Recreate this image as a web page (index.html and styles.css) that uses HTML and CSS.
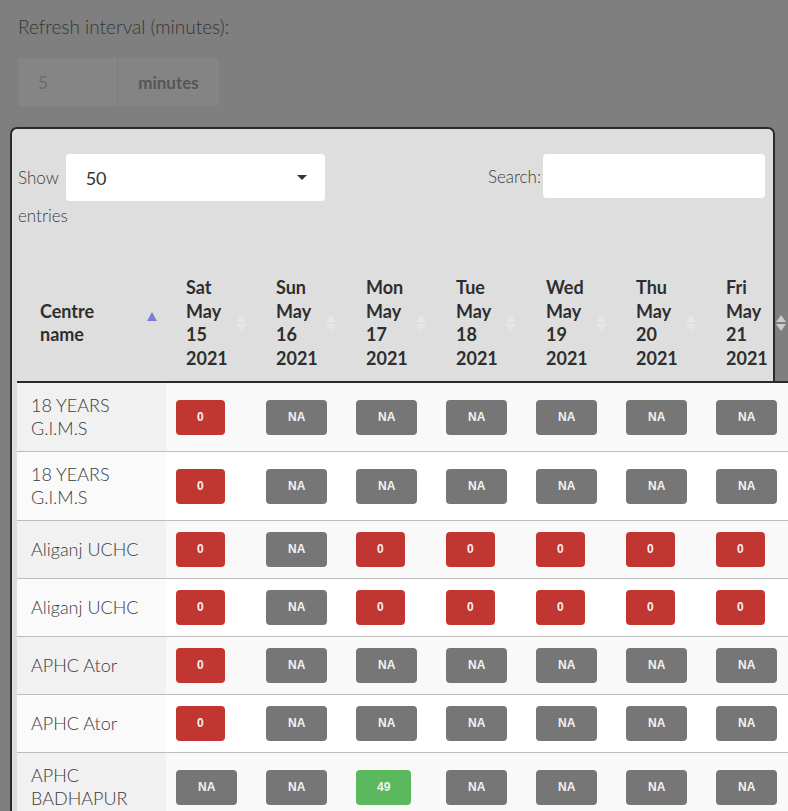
FILE: index.html
```html
<!DOCTYPE html>
<html>
<head>
<meta charset="utf-8">
<link rel="stylesheet" href="styles.css">
</head>
<body>
<div class="top">
  <div class="refresh-label">Refresh interval (minutes):</div>
  <div class="input-group"><span class="ig-input">5</span><span class="ig-addon">minutes</span></div>
</div>
<div class="panel">
  <div class="controls">
    <div class="length">
      <div class="length-row"><span>Show</span><div class="select"><span>50</span><span class="caret"></span></div></div>
      <div class="entries">entries</div>
    </div>
    <div class="filter"><span>Search:</span><div class="search-input"></div></div>
  </div>
  <table class="grid">
    <colgroup><col class="c-name"><col class="c-day"><col class="c-day"><col class="c-day"><col class="c-day"><col class="c-day"><col class="c-day"><col class="c-day"></colgroup>
    <thead>
      <tr>
        <th class="th-name sort-asc">Centre<br>name</th>
        <th class="sort-both">Sat<br>May<br>15<br>2021</th>
        <th class="sort-both">Sun<br>May<br>16<br>2021</th>
        <th class="sort-both">Mon<br>May<br>17<br>2021</th>
        <th class="sort-both">Tue<br>May<br>18<br>2021</th>
        <th class="sort-both">Wed<br>May<br>19<br>2021</th>
        <th class="sort-both">Thu<br>May<br>20<br>2021</th>
        <th class="sort-both">Fri<br>May<br>21<br>2021</th>
      </tr>
    </thead>
    <tbody>
      <tr class="odd">
        <td class="name">18 YEARS<br>G.I.M.S</td>
        <td><span class="badge red">0</span></td>
        <td><span class="badge gray">NA</span></td>
        <td><span class="badge gray">NA</span></td>
        <td><span class="badge gray">NA</span></td>
        <td><span class="badge gray">NA</span></td>
        <td><span class="badge gray">NA</span></td>
        <td><span class="badge gray">NA</span></td>
      </tr>
      <tr class="even">
        <td class="name">18 YEARS<br>G.I.M.S</td>
        <td><span class="badge red">0</span></td>
        <td><span class="badge gray">NA</span></td>
        <td><span class="badge gray">NA</span></td>
        <td><span class="badge gray">NA</span></td>
        <td><span class="badge gray">NA</span></td>
        <td><span class="badge gray">NA</span></td>
        <td><span class="badge gray">NA</span></td>
      </tr>
      <tr class="odd">
        <td class="name">Aliganj UCHC</td>
        <td><span class="badge red">0</span></td>
        <td><span class="badge gray">NA</span></td>
        <td><span class="badge red">0</span></td>
        <td><span class="badge red">0</span></td>
        <td><span class="badge red">0</span></td>
        <td><span class="badge red">0</span></td>
        <td><span class="badge red">0</span></td>
      </tr>
      <tr class="even">
        <td class="name">Aliganj UCHC</td>
        <td><span class="badge red">0</span></td>
        <td><span class="badge gray">NA</span></td>
        <td><span class="badge red">0</span></td>
        <td><span class="badge red">0</span></td>
        <td><span class="badge red">0</span></td>
        <td><span class="badge red">0</span></td>
        <td><span class="badge red">0</span></td>
      </tr>
      <tr class="odd">
        <td class="name">APHC Ator</td>
        <td><span class="badge red">0</span></td>
        <td><span class="badge gray">NA</span></td>
        <td><span class="badge gray">NA</span></td>
        <td><span class="badge gray">NA</span></td>
        <td><span class="badge gray">NA</span></td>
        <td><span class="badge gray">NA</span></td>
        <td><span class="badge gray">NA</span></td>
      </tr>
      <tr class="even">
        <td class="name">APHC Ator</td>
        <td><span class="badge red">0</span></td>
        <td><span class="badge gray">NA</span></td>
        <td><span class="badge gray">NA</span></td>
        <td><span class="badge gray">NA</span></td>
        <td><span class="badge gray">NA</span></td>
        <td><span class="badge gray">NA</span></td>
        <td><span class="badge gray">NA</span></td>
      </tr>
      <tr class="odd">
        <td class="name">APHC<br>BADHAPUR</td>
        <td><span class="badge gray">NA</span></td>
        <td><span class="badge gray">NA</span></td>
        <td><span class="badge green">49</span></td>
        <td><span class="badge gray">NA</span></td>
        <td><span class="badge gray">NA</span></td>
        <td><span class="badge gray">NA</span></td>
        <td><span class="badge gray">NA</span></td>
      </tr>
    </tbody>
  </table>
</div>
</body>
</html>
```

FILE: styles.css
```css
html, body {
  margin: 0;
  padding: 0;
  overflow: hidden;
}
body {
  background: #7f7f7f;
  font-family: Lato, "Open Sans", sans-serif;
  color: #333;
  height: 811px;
}
.top {
  padding: 16px 0 0 18px;
}
.refresh-label {
  font-size: 19px;
  font-weight: 300;
  line-height: 22px;
  color: #363636;
}
.input-group {
  display: flex;
  width: 201px;
  height: 48px;
  margin-top: 20px;
  border-radius: 4px;
  overflow: hidden;
  background: #868686;
}
.ig-input {
  width: 100px;
  padding-left: 20px;
  box-sizing: border-box;
  display: flex;
  align-items: center;
  font-size: 17px;
  color: #6c6c6c;
  border-right: 1px solid #7c7c7c;
}
.ig-addon {
  flex: 1;
  display: flex;
  align-items: center;
  justify-content: center;
  font-size: 17px;
  font-weight: 700;
  color: #565656;
  background: #848484;
}
.panel {
  margin: 21px 0 0 10px;
  width: 765px;
  box-sizing: border-box;
  border: 2px solid #2a2a2a;
  border-radius: 7px 7px 0 0;
  background: #dedede;
  padding: 25px 8px 0 5px;
  height: 700px;
}
.controls {
  display: flex;
  justify-content: space-between;
  align-items: flex-start;
  font-size: 17px;
  font-weight: 300;
  color: #3c3c3c;
}
.length {
  padding-left: 1px;
}
.length-row {
  display: flex;
  align-items: center;
  gap: 7px;
}
.select {
  width: 259px;
  height: 47px;
  background: #fff;
  border-radius: 4px;
  display: flex;
  align-items: center;
  justify-content: space-between;
  padding: 0 18px 0 20px;
  box-sizing: border-box;
  font-size: 18px;
  font-weight: 400;
  color: #333;
}
.caret {
  width: 0;
  height: 0;
  border-left: 5px solid transparent;
  border-right: 5px solid transparent;
  border-top: 5px solid #333;
}
.entries {
  margin-top: 4px;
  line-height: 22px;
}
.filter {
  display: flex;
  align-items: center;
  gap: 2px;
}
.search-input {
  width: 222px;
  height: 44px;
  background: #fff;
  border-radius: 4px;
}
.grid {
  margin-top: 38px;
  border-collapse: collapse;
  table-layout: fixed;
  width: 779px;
}
.c-name { width: 149px; }
.c-day { width: 90px; }
.grid th {
  position: relative;
  text-align: left;
  vertical-align: middle;
  font-size: 18px;
  line-height: 23.5px;
  font-weight: 700;
  color: #2e2e2e;
  padding: 11px 10px 11px 20px;
  border-bottom: 2px solid #2b2b2b;
}
.grid th.th-name {
  padding-left: 23px;
}
.sort-asc::after {
  content: "";
  position: absolute;
  right: 9px;
  top: 50%;
  margin-top: -11px;
  border-left: 5px solid transparent;
  border-right: 5px solid transparent;
  border-bottom: 9px solid #7b7bdc;
}
.sort-both::before,
.sort-both::after {
  content: "";
  position: absolute;
  right: 10px;
  border-left: 5px solid transparent;
  border-right: 5px solid transparent;
}
.sort-both::before {
  top: 50%;
  margin-top: -8px;
  border-bottom: 7px solid rgba(255, 255, 255, 0.25);
}
.sort-both::after {
  top: 50%;
  margin-top: 1px;
  border-top: 7px solid rgba(255, 255, 255, 0.25);
}
.grid th:last-child.sort-both::before {
  border-bottom-color: rgba(255, 255, 255, 0.6);
}
.grid th:last-child.sort-both::after {
  border-top-color: rgba(255, 255, 255, 0.6);
}
.grid td {
  padding: 11px 10px;
  vertical-align: middle;
  border-top: 1px solid #bdbdbd;
  font-size: 18px;
  line-height: 23px;
  font-weight: 300;
  color: #3a3a3a;
}
.grid tbody tr:first-child td {
  border-top: none;
}
.grid td.name {
  padding-left: 14px;
}
.odd td { background: #f9f9f9; }
.odd td.name { background: #f1f1f1; }
.even td { background: #ffffff; }
.even td.name { background: #fafafa; }
.badge {
  display: inline-block;
  padding: 11px 21px;
  font-family: "Liberation Sans", Arial, sans-serif;
  font-weight: 700;
  font-size: 12px;
  line-height: 13px;
  color: #f2f2f2;
  border-radius: 4px;
  vertical-align: middle;
}
.badge.red { background: #c23631; }
.badge.gray { background: #767676; padding-left: 22px; padding-right: 22px; }
.badge.green { background: #5cb85c; }
```
